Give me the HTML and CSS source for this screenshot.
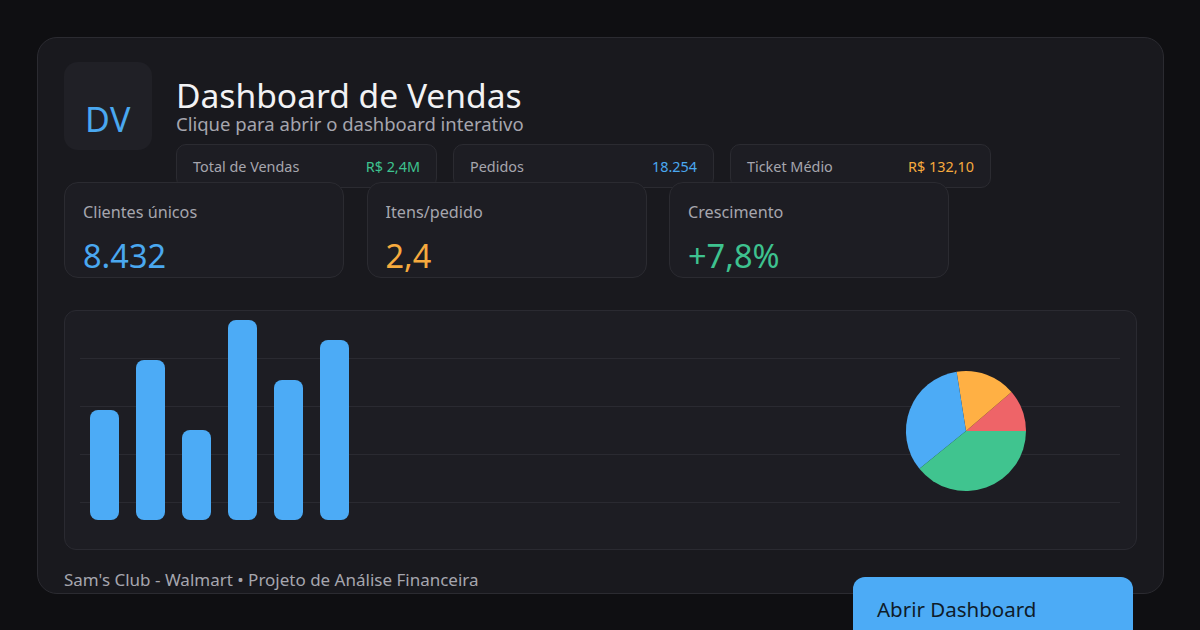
FILE: index.html
```html
<!DOCTYPE html>
<html lang="pt-BR">
<head>
<meta charset="utf-8">
<title>Dashboard de Vendas</title>
<link rel="stylesheet" href="styles.css">
</head>
<body>
<div class="card">
  <div class="header">
    <div class="logo">DV</div>
    <div class="head-main">
      <h1 class="title">Dashboard de Vendas</h1>
      <p class="subtitle">Clique para abrir o dashboard interativo</p>
      <div class="pills">
        <div class="pill"><span class="pill-label">Total de Vendas</span><span class="pill-value green">R$ 2,4M</span></div>
        <div class="pill"><span class="pill-label">Pedidos</span><span class="pill-value blue">18.254</span></div>
        <div class="pill"><span class="pill-label">Ticket Médio</span><span class="pill-value orange">R$ 132,10</span></div>
      </div>
    </div>
  </div>
  <div class="stats">
    <div class="stat"><div class="stat-label">Clientes únicos</div><div class="stat-value blue">8.432</div></div>
    <div class="stat"><div class="stat-label">Itens/pedido</div><div class="stat-value orange">2,4</div></div>
    <div class="stat"><div class="stat-label">Crescimento</div><div class="stat-value green">+7,8%</div></div>
  </div>
  <div class="chart">
    <svg class="chart-svg" width="1070" height="238" viewBox="0 0 1070 238">
      <g stroke="#2a2a31" stroke-width="1">
        <line x1="15" y1="47.5" x2="1055" y2="47.5"/>
        <line x1="15" y1="95.5" x2="1055" y2="95.5"/>
        <line x1="15" y1="143.5" x2="1055" y2="143.5"/>
        <line x1="15" y1="191.5" x2="1055" y2="191.5"/>
      </g>
      <g fill="#4cabf6">
        <rect x="25" y="99" width="29" height="110" rx="8"/>
        <rect x="71" y="49" width="29" height="160" rx="8"/>
        <rect x="117" y="119" width="29" height="90" rx="8"/>
        <rect x="163" y="9" width="29" height="200" rx="8"/>
        <rect x="209" y="69" width="29" height="140" rx="8"/>
        <rect x="255" y="29" width="29" height="180" rx="8"/>
      </g>
      <g transform="translate(841 60)">
        <path d="M60 60 L120 60 A60 60 0 0 0 105.5 20.9 Z" fill="#ee6468"/>
        <path d="M60 60 L105.5 20.9 A60 60 0 0 0 50.6 0.7 Z" fill="#ffb044"/>
        <path d="M60 60 L50.6 0.7 A60 60 0 0 0 13.4 97.8 Z" fill="#4cabf6"/>
        <path d="M60 60 L13.4 97.8 A60 60 0 0 0 120 60 Z" fill="#40c48f"/>
      </g>
    </svg>
  </div>
  <div class="footer">
    <span class="footer-text">Sam's Club - Walmart • Projeto de Análise Financeira</span>
    <button class="btn">Abrir Dashboard</button>
  </div>
</div>
</body>
</html>
```
FILE: styles.css
```css
* { box-sizing: border-box; }
html, body { margin: 0; padding: 0; }
body {
  background: #0f0f12;
  font-family: "Noto Sans", "Open Sans", sans-serif;
  color: #f0f0f2;
  width: 1200px;
  height: 630px;
  overflow: hidden;
}
.card {
  margin: 37px 0 0 37px;
  width: 1127px;
  height: 557px;
  background: #19191e;
  border: 1px solid #2b2b31;
  border-radius: 20px;
  padding: 24px 26px;
}
.header {
  display: flex;
  gap: 24px;
  align-items: flex-start;
}
.logo {
  width: 88px;
  height: 88px;
  border-radius: 14px;
  background: #202026;
  color: #4aa8f0;
  font-size: 34px;
  display: flex;
  align-items: center;
  justify-content: center;
  padding-top: 26px;
  letter-spacing: 0.5px;
}
.head-main {
  display: flex;
  flex-direction: column;
  padding-top: 15px;
}
.title {
  margin: 0;
  font-weight: 400;
  font-size: 33.6px;
  line-height: 36px;
  color: #f2f2f4;
}
.subtitle {
  margin: 0;
  font-size: 18.5px;
  line-height: 22px;
  color: #a6a6ae;
}
.pills {
  display: flex;
  gap: 16px;
  margin-top: 9px;
}
.pill {
  width: 261px;
  height: 44px;
  padding: 0 16px;
  border: 1px solid #2b2b31;
  border-radius: 10px;
  background: #1d1d23;
  display: flex;
  align-items: center;
  justify-content: space-between;
  font-size: 14.4px;
}
.pill-label { color: #a6a6ae; }
.green { color: #3ec28f; }
.blue { color: #4aa8f0; }
.orange { color: #f6aa3e; }
.stats {
  display: flex;
  gap: 22.5px;
  margin-top: -6px;
  position: relative;
}
.stat {
  width: 280px;
  height: 96px;
  border: 1px solid #2b2b31;
  border-radius: 14px;
  background: #1d1d23;
  padding: 18px 18px 0;
}
.stat-label {
  font-size: 16.2px;
  line-height: 22px;
  color: #a6a6ae;
}
.stat-value {
  font-size: 32.5px;
  line-height: 40px;
  margin-top: 13px;
}
.chart {
  margin-top: 32px;
  height: 240px;
  border: 1px solid #2a2a31;
  border-radius: 12px;
  background: #1d1d23;
}
.chart-svg { display: block; }
.footer {
  display: flex;
  justify-content: space-between;
  align-items: flex-start;
  margin-top: 19px;
}
.footer-text {
  font-size: 17px;
  line-height: 22px;
  color: #a6a6ae;
}
.btn {
  margin-top: 8px;
  margin-right: 4px;
  width: 280px;
  height: 64px;
  border: none;
  border-radius: 12px;
  background: #4cabf6;
  color: #0f1c2a;
  font-family: "Noto Sans", "Open Sans", sans-serif;
  font-size: 20.5px;
  text-align: left;
  padding: 0 24px 0;
}
```
